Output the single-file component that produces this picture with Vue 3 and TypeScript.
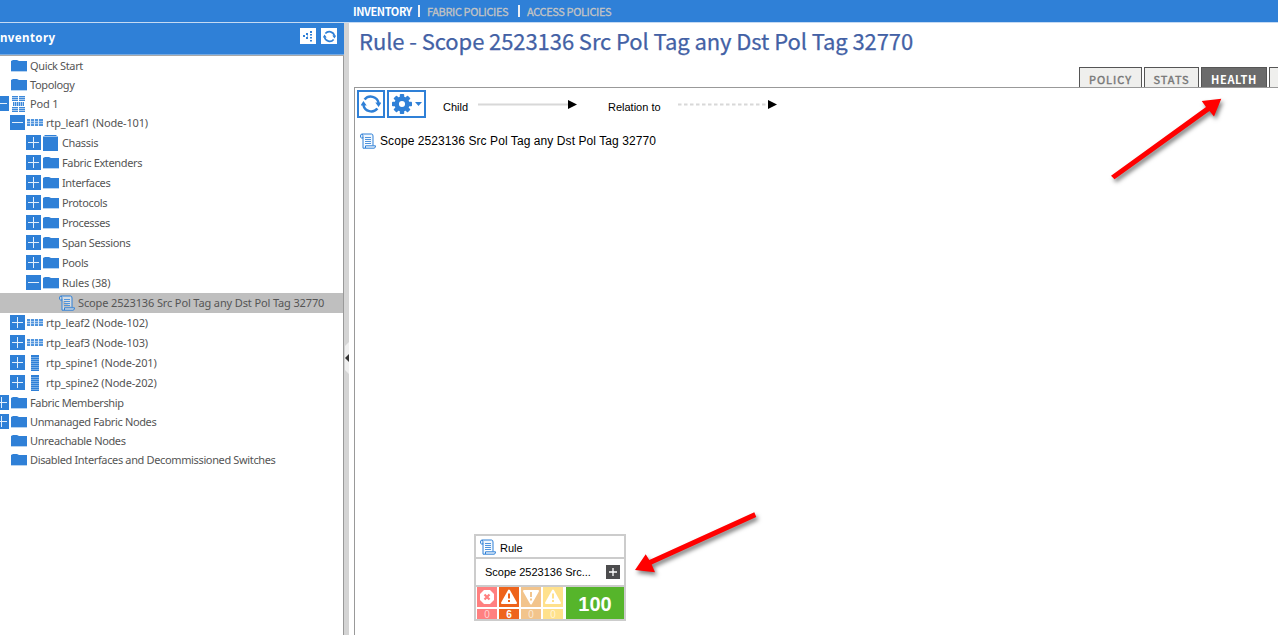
<script setup lang="ts">
interface TreeNode {
  label: string
  icon: 'folder' | 'pod' | 'leaf' | 'spine' | 'chassis' | 'rule'
  depth: number
  toggle?: 'plus' | 'minus'
  compact?: boolean
  selected?: boolean
}

const nodes: TreeNode[] = [
  { label: 'Quick Start', icon: 'folder', depth: 0, compact: true },
  { label: 'Topology', icon: 'folder', depth: 0, compact: true },
  { label: 'Pod 1', icon: 'pod', depth: 0, toggle: 'minus', compact: true },
  { label: 'rtp_leaf1 (Node-101)', icon: 'leaf', depth: 1, toggle: 'minus' },
  { label: 'Chassis', icon: 'chassis', depth: 2, toggle: 'plus' },
  { label: 'Fabric Extenders', icon: 'folder', depth: 2, toggle: 'plus' },
  { label: 'Interfaces', icon: 'folder', depth: 2, toggle: 'plus' },
  { label: 'Protocols', icon: 'folder', depth: 2, toggle: 'plus' },
  { label: 'Processes', icon: 'folder', depth: 2, toggle: 'plus' },
  { label: 'Span Sessions', icon: 'folder', depth: 2, toggle: 'plus' },
  { label: 'Pools', icon: 'folder', depth: 2, toggle: 'plus' },
  { label: 'Rules (38)', icon: 'folder', depth: 2, toggle: 'minus' },
  { label: 'Scope 2523136 Src Pol Tag any Dst Pol Tag 32770', icon: 'rule', depth: 3, selected: true },
  { label: 'rtp_leaf2 (Node-102)', icon: 'leaf', depth: 1, toggle: 'plus' },
  { label: 'rtp_leaf3 (Node-103)', icon: 'leaf', depth: 1, toggle: 'plus' },
  { label: 'rtp_spine1 (Node-201)', icon: 'spine', depth: 1, toggle: 'plus' },
  { label: 'rtp_spine2 (Node-202)', icon: 'spine', depth: 1, toggle: 'plus' },
  { label: 'Fabric Membership', icon: 'folder', depth: 0, toggle: 'plus', compact: true },
  { label: 'Unmanaged Fabric Nodes', icon: 'folder', depth: 0, toggle: 'plus', compact: true },
  { label: 'Unreachable Nodes', icon: 'folder', depth: 0, compact: true },
  { label: 'Disabled Interfaces and Decommissioned Switches', icon: 'folder', depth: 0, compact: true },
]

const faults = [
  { level: 'critical', count: 0 },
  { level: 'major', count: 6 },
  { level: 'minor', count: 0 },
  { level: 'warning', count: 0 },
]

const gearTeeth = [0, 45, 90, 135, 180, 225, 270, 315]

function nodeClass(n: TreeNode) {
  return ['depth' + n.depth, n.icon, { compact: n.compact, selected: n.selected, wordy: !/\d/.test(n.label) }]
}
</script>

<template>
  <div class="app">
    <svg class="defs" width="0" height="0">
      <symbol id="scroll" viewBox="0 0 16 16">
        <path d="M3 5H1.500Q.5 5 .5 3T2 1H11.500Q13 1 13 3V12.500M3 4.500V15.200H14Q15.500 15.200 15.500 12.800H5.500V15M2 1Q3.200 1.500 3 5" fill="#e8f2fc" fill-opacity=".6" stroke="#2f80d7" stroke-width="1" />
        <path d="M5 4.500H11M5 6.500H11M5 8.500H11M5 10.500H11" stroke="#4f94dd" stroke-width="1" />
      </symbol>
      <symbol id="refresh" viewBox="0 0 20 20">
        <path d="M3.600 5.500A8 8 0 0 1 17.600 9M16.400 14.500A8 8 0 0 1 2.400 11" fill="none" stroke="#2f80d7" stroke-width="2.500" />
        <path d="M14.300 8.500H20.500L17.600 13ZM-.5 11.500H5.700L2.400 7Z" fill="#2f80d7" />
      </symbol>
    </svg>

    <nav class="topnav">
      <a class="current">INVENTORY</a><i></i><a class="fabric">FABRIC POLICIES</a><i></i><a class="access">ACCESS POLICIES</a>
    </nav>

    <div class="body">
      <aside class="side">
        <header class="side-head">
          <h2>nventory</h2>
          <button class="mini">
            <svg width="16" height="16"><g fill="#2f80d7"><rect x="3" y="7" width="2" height="2" /><rect x="6" y="5" width="2" height="2" /><rect x="6" y="9" width="2" height="2" /><rect x="7" y="7" width="1" height="2" opacity=".5" /><rect x="10" y="3" width="2" height="2" /><rect x="10" y="6" width="2" height="1.500" /><rect x="10" y="9" width="2" height="1.500" /><rect x="10" y="12" width="2" height="1.500" /></g></svg>
          </button>
          <button class="mini"><svg width="13" height="13"><use href="#refresh" /></svg></button>
        </header>
        <ul class="tree">
          <li v-for="n in nodes" :key="n.label" :class="nodeClass(n)">
            <span class="toggle">
              <svg v-if="n.toggle" width="15" height="15">
                <rect width="15" height="15" fill="#2f80d7" />
                <path :d="n.toggle === 'plus' ? 'M2 7.500H13M7.500 2V13' : 'M2 7.500H13'" stroke="#e3effb" />
              </svg>
            </span>
            <span class="icon">
              <svg v-if="n.icon === 'folder'" width="16" height="13"><path d="M0 2L2 1H6L8 2H16V12H0Z" fill="#2f80d7" /><path d="M0 12.500H16" stroke="#b7d3f0" /></svg>
              <svg v-else-if="n.icon === 'chassis'" width="16" height="16"><path d="M2 0H13L15 2V16H0V2Z" fill="#2f80d7" /><path d="M.5 1.500H14.500" stroke="#9cc4ee" /></svg>
              <svg v-else-if="n.icon === 'pod'" width="16" height="16">
                <path d="M1 0H7V5H1ZM8 0H14V5H8ZM1 11H7V16H1ZM8 11H14V16H8ZM2 6H13V10H2Z" fill="#a9cbef" />
                <g stroke="#3c88da"><path d="M1 .5H7M1 2.500H7M1 4.500H7M8 .5H14M8 2.500H14M8 4.500H14M1 11.500H7M1 13.500H7M1 15.500H7M8 11.500H14M8 13.500H14M8 15.500H14" /><path d="M2.500 6V10M4.500 6V10M6.500 6V10M8.500 6V10M10.500 6V10M12.500 6V10" /></g>
              </svg>
              <svg v-else-if="n.icon === 'leaf'" width="16" height="7"><rect width="16" height="7" fill="#4f94dd" /><path d="M0 2.500H16M0 4.500H16" stroke="#a9cbef" stroke-width=".9" /><path d="M3.500 0V7M7.500 0V7M11.500 0V7" stroke="#e4effb" /></svg>
              <svg v-else-if="n.icon === 'spine'" width="16" height="16"><rect x="4" width="8" height="16" fill="#2f80d7" /><path d="M4 2.500H12M4 4.500H12M4 6.500H12M4 8.500H12M4 10.500H12M4 12.500H12M4 14.500H12" stroke="#78aee6" /></svg>
              <svg v-else width="16" height="16"><use href="#scroll" /></svg>
            </span>
            <span class="label">{{ n.label }}</span>
          </li>
        </ul>
      </aside>

      <div class="splitter">
        <svg width="5" height="32"><path d="M1 4L5 0V32L1 28Z" fill="#efefef" /><path d="M5 12V20L1 16Z" fill="#333" /></svg>
      </div>

      <main class="main">
        <h1>Rule - Scope 2523136 Src Pol Tag any Dst Pol Tag 32770</h1>
        <div class="tabs">
          <span class="tab policy">POLICY</span><span class="tab stats">STATS</span><span class="tab health active">HEALTH</span><span class="tab cut"></span>
        </div>
        <section class="panel">
          <div class="toolbar">
            <button class="tool"><svg width="20" height="20"><use href="#refresh" /></svg></button>
            <button class="tool gear">
              <svg width="20" height="20" viewBox="-10 -10 20 20">
                <circle r="5.300" fill="none" stroke="#2f80d7" stroke-width="4.500" />
                <g fill="#2f80d7"><rect v-for="a in gearTeeth" :key="a" x="-2.200" y="-10" width="4.400" height="4.500" rx=".8" :transform="`rotate(${a})`" /></g>
              </svg>
              <svg width="7" height="4"><path d="M0 0H7L3.500 4Z" fill="#2f80d7" /></svg>
            </button>
            <span class="key child">Child</span>
            <svg class="line" width="100" height="9"><path d="M0 4.500H91" stroke="#d8d8d8" stroke-width="2" /><path d="M90 0L99 4.500L90 9Z" /></svg>
            <span class="key relation">Relation to</span>
            <svg class="line" width="100" height="9"><path d="M0 4.500H89" stroke="#d8d8d8" stroke-width="2" stroke-dasharray="3.500 2.500" /><path d="M90 0L99 4.500L90 9Z" /></svg>
          </div>
          <div class="crumb">
            <svg width="16" height="16"><use href="#scroll" /></svg>
            <span>Scope 2523136 Src Pol Tag any Dst Pol Tag 32770</span>
          </div>

          <div class="card">
            <div class="card-title"><svg width="16" height="16"><use href="#scroll" /></svg><span>Rule</span></div>
            <div class="card-name">
              <span>Scope 2523136 Src...</span>
              <svg width="14" height="14"><rect width="14" height="14" fill="#4c4c4e" /><path d="M3 7H11M7 3V11" stroke="#fff" stroke-width="1.300" /></svg>
            </div>
            <div class="card-health">
              <div v-for="f in faults" :key="f.level" :class="['fault', f.level]">
                <div class="glyph">
                  <svg width="20" height="20" viewBox="0 0 20 20">
                    <template v-if="f.level === 'critical'"><path d="M7 3H13L17 7V13L13 17H7L3 13V7Z" fill="#fff" /><path d="M7.500 7.500L12.500 12.500M12.500 7.500L7.500 12.500" stroke="#ff8080" stroke-width="2.200" /></template>
                    <template v-else-if="f.level === 'minor'"><path d="M3 4H17L10 16.500Z" fill="#fff" stroke="#fff" stroke-width="2" stroke-linejoin="round" /><path d="M10 5V10M10 11.500V13.500" stroke="#f2c48c" stroke-width="2" /></template>
                    <template v-else><path d="M10 3.500L17 16H3Z" fill="#fff" stroke="#fff" stroke-width="2" stroke-linejoin="round" /><path d="M10 6.500V11.500M10 13V15" :stroke="f.level === 'major' ? '#ee641c' : '#ffe18c'" stroke-width="2" /></template>
                  </svg>
                </div>
                <div class="count">{{ f.count }}</div>
              </div>
              <div class="score">100</div>
            </div>
          </div>
        </section>
      </main>
    </div>

    <svg class="pointer to-health" width="130" height="100">
      <path d="M7 80.700L102 12L97.700 6L117.300 3.700L110 21.500L105.500 16L10.500 84.300Z" fill="#f00" />
    </svg>
    <svg class="pointer to-card" width="140" height="80">
      <path d="M124.300 5.300L126.300 10L21.700 57.500L25 65.300L5 63L15.700 47.300L19.300 53Z" fill="#f00" />
    </svg>
  </div>
</template>

<style>
html, body { margin: 0; background: #fff; }
</style>

<style scoped>
.app { position: relative; width: 1278px; height: 635px; overflow: hidden; background: #fff; display: flex; flex-direction: column; font-family: "Liberation Sans", sans-serif; color: #000; }
.defs { position: absolute; }
svg { display: block; flex: none; overflow: visible; }
.topnav { height: 22px; box-sizing: border-box; background: #2f80d7; box-shadow: 0 1px #c5daf3; display: flex; align-items: center; padding-left: 353px; font: 400 11px/22px "Noto Sans CJK SC", sans-serif; letter-spacing: -.37px; color: #c4c4c4; flex: none; white-space: nowrap; }
.topnav a { -webkit-text-stroke: .3px currentColor; }
.topnav .current { color: #fff; font-weight: 700; width: 59px; letter-spacing: -.4px; -webkit-text-stroke: 0; }
.topnav .fabric { width: 85px; }
.topnav i { width: 2px; height: 12px; background: #e9eff6; margin: 0 7px 0 6px; }
.body { flex: 1; display: flex; margin-top: 1px; min-height: 0; }
.side { width: 343px; border-right: 1px solid #999; display: flex; flex-direction: column; flex: none; }
.side-head { height: 33px; margin-right: -1px; box-sizing: border-box; background: #2f80d7; border-bottom: 1px solid #a8a8a8; box-shadow: inset 0 -1px #75aae3; display: flex; align-items: flex-start; gap: 5px; padding: 5px 7px 0 0; }
.side-head h2 { flex: 1; margin: 0; font: 700 11.500px/20px "Noto Sans", sans-serif; letter-spacing: .4px; color: #fff; }
button { border: 0; padding: 0; margin: 0; background: #fff; display: flex; align-items: center; justify-content: center; }
.mini { width: 16px; height: 16px; }
.tree { list-style: none; margin: 0; padding: 0; }
.tree li { height: 20px; display: flex; align-items: center; white-space: nowrap; font: 11px/20px "Noto Sans", sans-serif; letter-spacing: -.17px; color: #555; }
.tree li.wordy { letter-spacing: -.36px; }
.tree li.compact { height: 19px; line-height: 19px; }
.tree li.selected { background: #bfbfbf; letter-spacing: -.13px; }
.toggle { width: 15px; height: 15px; flex: none; margin-bottom: 1px; }
.icon { width: 16px; margin: 0 3px 1px 2px; flex: none; }
.compact .toggle, .compact .icon { margin-bottom: 0; }
.depth0 .toggle { margin-left: -6px; }
.depth1 .toggle { margin-left: 10px; }
.depth2 .toggle { margin-left: 26px; }
.depth3 .toggle { margin-left: 42px; }
.splitter { width: 5px; background: #d4d4d4; display: flex; align-items: flex-start; padding-top: 319px; box-sizing: border-box; flex: none; }
.main { flex: 1; min-width: 0; padding-left: 5px; display: flex; flex-direction: column; }
h1 { margin: 0; height: 44px; padding-left: 5px; font: 400 22px/34px "Noto Sans CJK SC", sans-serif; letter-spacing: -.08px; -webkit-text-stroke: .25px #4361a5; color: #4361a5; white-space: nowrap; }
.tabs { height: 20px; display: flex; justify-content: flex-end; gap: 2px; }
.tab { box-sizing: border-box; height: 20px; border: 1px solid #555; border-bottom: 0; background: #efefed; color: #777; text-align: center; font: 400 11px/22px "Noto Sans CJK SC", sans-serif; letter-spacing: 1px; -webkit-text-stroke: .4px currentColor; white-space: nowrap; }
.policy { width: 63px; }
.stats { width: 55px; }
.health { width: 66px; }
.tab.active { background: #6b6b6b; color: #fff; font-weight: 700; letter-spacing: .6px; -webkit-text-stroke: 0; }
.cut { width: 9px; border-right: 0; }
.panel { flex: 1; border: solid #999; border-width: 1px 0 0 1px; position: relative; }
.toolbar { display: flex; align-items: center; height: 28px; padding: 2px 0 0 2px; }
.tool { width: 28px; height: 28px; box-sizing: border-box; border: 2px solid #2f80d7; }
.gear { width: 39px; margin-left: 2px; gap: 3px; }
.key { font-size: 11px; margin-top: 5px; white-space: nowrap; }
.line { margin-top: 1px; }
.child { width: 35px; margin-left: 17px; }
.relation { width: 70px; margin-left: 30px; }
.crumb { display: flex; align-items: center; gap: 4px; margin: 15px 0 0 5px; height: 16px; font-size: 12px; letter-spacing: .075px; white-space: nowrap; }
.card { position: absolute; left: 119px; top: 446px; width: 152px; height: 87px; box-sizing: border-box; border: 2px solid #ccc; background: #fff; font-size: 11px; }
.card-title { height: 21px; border-bottom: 2px solid #ccc; display: flex; align-items: center; gap: 4px; padding-left: 4px; }
.card-title span { padding-top: 2px; }
.card-name { height: 26px; border-bottom: 2px solid #ccc; display: flex; align-items: center; justify-content: space-between; padding: 0 4px 0 9px; white-space: nowrap; }
.card-health { height: 32px; display: flex; padding-left: 1px; }
.fault { width: 20px; margin-right: 2px; }
.fault .glyph { height: 20px; margin-bottom: 2px; }
.fault .count { height: 10px; overflow: hidden; text-align: center; font: 10px/11px "Liberation Sans", sans-serif; color: rgba(255, 255, 255, .65); }
.critical > div { background: #ff8080; }
.major > div { background: #ee641c; }
.fault.major .count { color: #fff; font-weight: 700; }
.minor > div { background: #f2c48c; }
.warning > div { background: #ffe18c; }
.score { flex: 1; background: #56b52b; color: #fff; font: 700 20px/35px "Liberation Sans", sans-serif; text-align: center; margin-left: 1px; }
.pointer { position: absolute; filter: drop-shadow(2px 3px 2px rgba(0, 0, 0, .5)); }
.to-health { left: 1104px; top: 95px; }
.to-card { left: 630px; top: 507px; }
</style>
